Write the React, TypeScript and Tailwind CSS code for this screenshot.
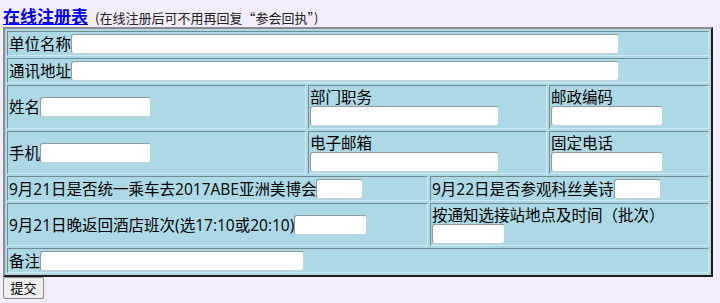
import React from 'react';

const cell =
  'box-border border border-t-[#6f8c95] border-l-[#6f8c95] border-b-[#cfe9f1] border-r-[#cfe9f1] bg-[#add8e6] px-[1px]';
const input =
  'box-border h-[20px] rounded-[3px] bg-white border border-t-[#8f9aa0] border-l-[#8f9aa0] border-b-[#c7d0d4] border-r-[#c7d0d4] outline-none';

const Row = ({ h, children }: { h: string; children: React.ReactNode }) => (
  <div className={`flex gap-[2px] ${h}`}>{children}</div>
);

export default function App() {
  return (
    <div className="min-h-[303px] w-full bg-[#f3ecfb] px-[3px] pt-[3px] text-black font-[family-name:'Open_Sans','Noto_Sans_CJK_SC',sans-serif]">
      {/* header */}
      <div className="flex items-end h-[24px]">
        <a href="#" className="text-[17px] leading-[21px] font-bold text-[#0000ee] underline">
          在线注册表
        </a>
        <span className="ml-[7px] text-[13px] leading-[19px] text-[#222] font-[family-name:'Noto_Sans_CJK_SC',sans-serif]">
          (在线注册后可不用再回复“参会回执”)
        </span>
      </div>

      {/* form table */}
      <div className="w-[710px] flex flex-col gap-[2px] p-[2px] bg-[#add8e6] border-2 border-t-[#8f8a8f] border-l-[#8f8a8f] border-b-[#1c1c1c] border-r-[#1c1c1c] text-[15.5px] leading-[18px]">
        <Row h="h-[25px]">
          <div className={`${cell} flex-1 flex items-center`}>
            单位名称<input className={`${input} w-[548px]`} />
          </div>
        </Row>
        <Row h="h-[25px]">
          <div className={`${cell} flex-1 flex items-center`}>
            通讯地址<input className={`${input} w-[548px]`} />
          </div>
        </Row>
        <Row h="h-[44px]">
          <div className={`${cell} w-[299px] flex items-center`}>
            姓名<input className={`${input} w-[111px]`} />
          </div>
          <div className={`${cell} w-[239px] flex flex-col justify-center`}>
            <span>部门职务</span>
            <input className={`${input} w-[189px]`} />
          </div>
          <div className={`${cell} flex-1 flex flex-col justify-center`}>
            <span>邮政编码</span>
            <input className={`${input} w-[112px]`} />
          </div>
        </Row>
        <Row h="h-[43px]">
          <div className={`${cell} w-[299px] flex items-center`}>
            手机<input className={`${input} w-[111px]`} />
          </div>
          <div className={`${cell} w-[239px] flex flex-col justify-center`}>
            <span>电子邮箱</span>
            <input className={`${input} w-[189px]`} />
          </div>
          <div className={`${cell} flex-1 flex flex-col justify-center`}>
            <span>固定电话</span>
            <input className={`${input} w-[112px]`} />
          </div>
        </Row>
        <Row h="h-[25px]">
          <div className={`${cell} w-[421px] flex items-center`}>
            9月21日是否统一乘车去2017ABE亚洲美博会<input className={`${input} w-[47px]`} />
          </div>
          <div className={`${cell} flex-1 flex items-center`}>
            9月22日是否参观科丝美诗<input className={`${input} w-[47px]`} />
          </div>
        </Row>
        <Row h="h-[43px]">
          <div className={`${cell} w-[421px] flex items-center`}>
            9月21日晚返回酒店班次(选17:10或20:10)<input className={`${input} w-[73px]`} />
          </div>
          <div className={`${cell} flex-1 flex flex-col justify-center`}>
            <span>按通知选接站地点及时间（批次）</span>
            <input className={`${input} w-[73px]`} />
          </div>
        </Row>
        <Row h="h-[25px]">
          <div className={`${cell} flex-1 flex items-center`}>
            备注<input className={`${input} w-[264px]`} />
          </div>
        </Row>
      </div>

      <button className="block h-[22px] w-[41px] box-border rounded-[2px] bg-[#efefef] border border-[#8a8a8a] text-[13px] leading-[18px]">
        提交
      </button>
    </div>
  );
}
